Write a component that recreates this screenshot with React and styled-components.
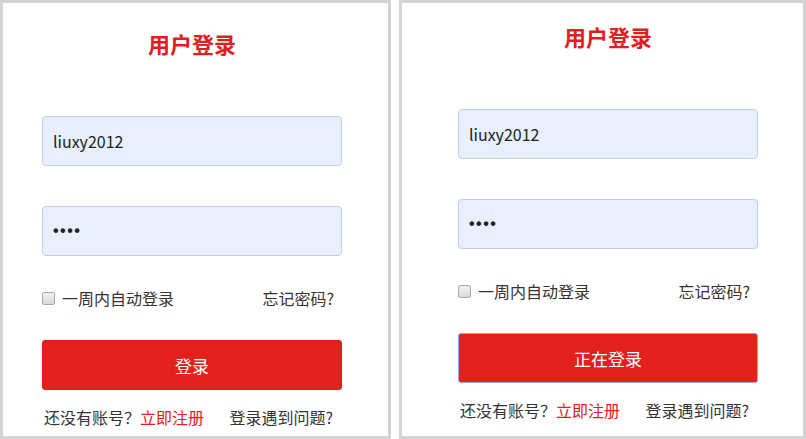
import React from "react";
import styled, { createGlobalStyle } from "styled-components";

const GlobalStyle = createGlobalStyle`
  html, body {
    margin: 0;
    padding: 0;
    background: #fff;
  }
  body {
    font-family: "Microsoft YaHei", "Noto Sans CJK SC", "Noto Sans", sans-serif;
    color: #333;
  }
`;

const Page = styled.div`
  display: flex;
  gap: 8px;
  width: 806px;
  height: 439px;
`;

const Panel = styled.div`
  box-sizing: border-box;
  width: ${({ width }) => width}px;
  height: 439px;
  border: 3px solid #d4d4d4;
  padding-top: ${({ top }) => top}px;
  padding-left: ${({ left }) => left}px;
`;

const Form = styled.div`
  width: 300px;
  display: flex;
  flex-direction: column;
`;

const Title = styled.h2`
  margin: 0;
  font-size: 22px;
  line-height: 30px;
  font-weight: 700;
  color: #e0201e;
  text-align: center;
`;

const Field = styled.input`
  box-sizing: border-box;
  width: 300px;
  height: 50px;
  margin-top: ${({ gap }) => gap}px;
  padding: 0 10px;
  border: 1px solid #c9ced6;
  border-radius: 4px;
  background: #e8f0fe;
  font-family: ${({ type }) =>
    type === "password" ? '"Liberation Sans", Arial, sans-serif' : "inherit"};
  font-size: 16px;
  font-weight: ${({ type }) => (type === "password" ? 700 : 400)};
  letter-spacing: ${({ type }) => (type === "password" ? "1.5px" : "0")};
  color: #222;
  outline: none;
`;

const Options = styled.div`
  display: flex;
  justify-content: space-between;
  align-items: center;
  height: 20px;
  margin-top: 32px;
  padding-right: 8px;
  font-size: 16px;
  line-height: 20px;
`;

const Remember = styled.label`
  display: flex;
  align-items: center;
  gap: 7px;
`;

const Check = styled.span`
  box-sizing: border-box;
  width: 13px;
  height: 13px;
  border: 1px solid #a9a9a9;
  border-radius: 2px;
  background: linear-gradient(#f2f2f2, #d9d9d9);
`;

const Submit = styled.button`
  box-sizing: border-box;
  width: 300px;
  height: 50px;
  margin-top: 32px;
  border: 1px solid ${({ busy }) => (busy ? "#a4a4dc" : "#e2211c")};
  border-radius: 3px;
  background: #e2211c;
  color: #fff;
  font-family: inherit;
  font-size: 17px;
  cursor: pointer;
`;

const Footer = styled.div`
  display: flex;
  justify-content: space-between;
  align-items: center;
  height: 20px;
  margin-top: 17px;
  padding: 0 9px 0 2px;
  font-size: 16px;
  line-height: 20px;
`;

const RedLink = styled.span`
  color: #e0201e;
`;

const LoginBox = ({ width, top, left, busy }) => (
  <Panel width={width} top={top} left={left}>
    <Form>
      <Title>用户登录</Title>
      <Field gap={58} type="text" value="liuxy2012" readOnly />
      <Field gap={40} type="password" value="1234" readOnly />
      <Options>
        <Remember>
          <Check />
          一周内自动登录
        </Remember>
        <span>忘记密码?</span>
      </Options>
      <Submit busy={busy}>{busy ? "正在登录" : "登录"}</Submit>
      <Footer>
        <span>
          还没有账号？<RedLink>立即注册</RedLink>
        </span>
        <span>登录遇到问题?</span>
      </Footer>
    </Form>
  </Panel>
);

export default function App() {
  return (
    <>
      <GlobalStyle />
      <Page>
        <LoginBox width={391} top={25} left={39} />
        <LoginBox width={407} top={18} left={56} busy />
      </Page>
    </>
  );
}
